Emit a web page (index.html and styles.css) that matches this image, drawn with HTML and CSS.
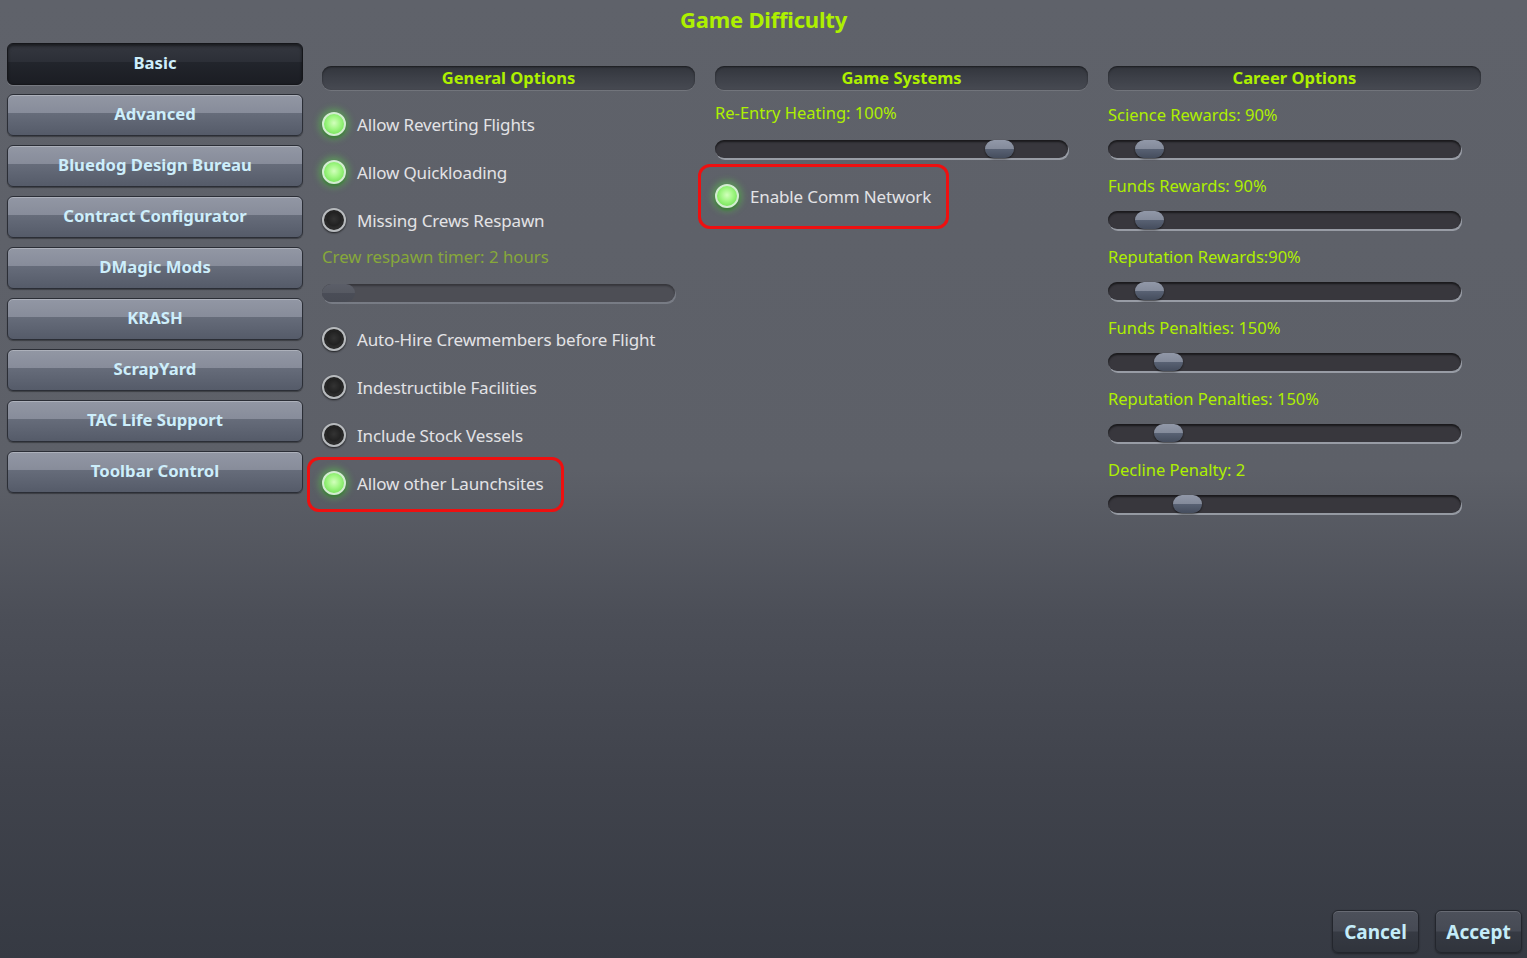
FILE: index.html
```html
<!DOCTYPE html>
<html>
<head>
<meta charset="utf-8">
<link rel="stylesheet" href="styles.css">
</head>
<body>
<div class="screen">
  <h1 class="title">Game Difficulty</h1>
  <div class="main">
    <nav class="sidebar">
      <div class="tab active">Basic</div>
      <div class="tab">Advanced</div>
      <div class="tab">Bluedog Design Bureau</div>
      <div class="tab">Contract Configurator</div>
      <div class="tab">DMagic Mods</div>
      <div class="tab">KRASH</div>
      <div class="tab">ScrapYard</div>
      <div class="tab">TAC Life Support</div>
      <div class="tab">Toolbar Control</div>
    </nav>

    <section class="col general">
      <div class="col-head">General Options</div>
      <div class="toggle"><span class="dot on"></span><span>Allow Reverting Flights</span></div>
      <div class="toggle"><span class="dot on"></span><span>Allow Quickloading</span></div>
      <div class="toggle"><span class="dot"></span><span>Missing Crews Respawn</span></div>
      <div class="label disabled">Crew respawn timer: 2 hours</div>
      <div class="track disabled"><span class="thumb" style="left:0px"></span></div>
      <div class="toggle after-slider"><span class="dot"></span><span>Auto-Hire Crewmembers before Flight</span></div>
      <div class="toggle"><span class="dot"></span><span>Indestructible Facilities</span></div>
      <div class="toggle"><span class="dot"></span><span>Include Stock Vessels</span></div>
      <div class="toggle mark mark-a"><span class="dot on"></span><span>Allow other Launchsites</span></div>
    </section>

    <section class="col systems">
      <div class="col-head">Game Systems</div>
      <div class="setting">
        <div class="label">Re-Entry Heating: 100%</div>
        <div class="track"><span class="thumb" style="left:270px"></span></div>
      </div>
      <div class="toggle mark mark-b"><span class="dot on"></span><span>Enable Comm Network</span></div>
    </section>

    <section class="col career">
      <div class="col-head">Career Options</div>
      <div class="setting">
        <div class="label">Science Rewards: 90%</div>
        <div class="track"><span class="thumb" style="left:27px"></span></div>
      </div>
      <div class="setting">
        <div class="label">Funds Rewards: 90%</div>
        <div class="track"><span class="thumb" style="left:27px"></span></div>
      </div>
      <div class="setting">
        <div class="label">Reputation Rewards:90%</div>
        <div class="track"><span class="thumb" style="left:27px"></span></div>
      </div>
      <div class="setting">
        <div class="label">Funds Penalties: 150%</div>
        <div class="track"><span class="thumb" style="left:46px"></span></div>
      </div>
      <div class="setting">
        <div class="label">Reputation Penalties: 150%</div>
        <div class="track"><span class="thumb" style="left:46px"></span></div>
      </div>
      <div class="setting">
        <div class="label">Decline Penalty: 2</div>
        <div class="track"><span class="thumb" style="left:65px"></span></div>
      </div>
    </section>
  </div>
  <footer class="footer">
    <div class="btn">Cancel</div>
    <div class="btn">Accept</div>
  </footer>
</div>
</body>
</html>
```

FILE: styles.css
```css
* { box-sizing: border-box; }
html, body { margin: 0; padding: 0; }
body {
  width: 1527px;
  height: 958px;
  overflow: hidden;
  font-family: "Noto Sans", "Open Sans", sans-serif;
  background: linear-gradient(to bottom, #5f626a 0px, #5d6068 470px, #4b4e57 620px, #40434c 780px, #363a43 958px);
}
.screen {
  height: 958px;
  display: flex;
  flex-direction: column;
}
.title {
  margin: 0;
  height: 42px;
  padding-top: 4px;
  text-align: center;
  font-size: 22px;
  line-height: 30px;
  font-weight: 700;
  color: #aef000;
  letter-spacing: -0.2px;
}
.main {
  display: flex;
  align-items: flex-start;
}
.sidebar {
  width: 296px;
  margin-left: 7px;
  margin-top: 1px;
  display: flex;
  flex-direction: column;
  gap: 9px;
}
.tab {
  height: 42px;
  border-radius: 6px;
  border: 1px solid #2b2e36;
  background: linear-gradient(to bottom, #9297a4 0%, #878c9a 45%, #666c7a 46%, #555b69 100%);
  box-shadow: inset 0 1px 0 rgba(255,255,255,0.25), 0 1px 1px rgba(0,0,0,0.35);
  color: #cdeefb;
  font-weight: 700;
  font-size: 16.7px;
  display: flex;
  align-items: center;
  justify-content: center;
  padding-bottom: 3px;
}
.tab.active {
  background: linear-gradient(to bottom, #34373f 0%, #2c2f37 45%, #22252c 46%, #1b1d23 100%);
  border-color: #15161a;
  box-shadow: inset 0 2px 3px rgba(0,0,0,0.5), 0 1px 0 rgba(255,255,255,0.15);
}
.col {
  width: 373px;
  margin-left: 19px;
  padding-top: 24px;
  display: flex;
  flex-direction: column;
}
.col + .col { margin-left: 20px; }
.col-head {
  height: 24px;
  border-radius: 9px;
  background: linear-gradient(to bottom, #32353c 0%, #3d4048 50%, #474a52 100%);
  box-shadow: inset 0 1px 2px rgba(0,0,0,0.5), 0 1px 0 rgba(255,255,255,0.12);
  color: #aef000;
  font-weight: 700;
  font-size: 16.5px;
  line-height: 24px;
  text-align: center;
  margin-bottom: 12px;
}
.general .col-head { margin-bottom: 10px; }
.toggle {
  height: 48px;
  display: flex;
  align-items: center;
  gap: 11px;
  color: #e3e3e6;
  font-size: 17px;
  letter-spacing: -0.15px;
  width: fit-content;
  position: relative;
}
.toggle.after-slider { margin-top: 13px; }
.dot {
  width: 24px;
  height: 24px;
  border-radius: 50%;
  flex: none;
  border: 2px solid #b7babd;
  background: radial-gradient(circle at 50% 45%, #333 0%, #222 45%, #4a4a4a 100%);
  box-shadow: 0 1px 2px rgba(0,0,0,0.7), inset 0 0 2px rgba(0,0,0,0.8);
}
.dot.on {
  border-color: #d2edd0;
  background: radial-gradient(circle at 50% 45%, #d2ffbc 0%, #a2f785 40%, #5fd944 100%);
  box-shadow: 0 0 7px 3px rgba(90,220,70,0.45), 0 2px 3px rgba(20,80,20,0.7);
}
.mark::after {
  content: "";
  position: absolute;
  border: 3px solid #ee1010;
  border-radius: 12px;
  pointer-events: none;
}
.mark-a::after { left: -15px; right: -21px; top: -2px; bottom: -5px; }
.mark-b::after { left: -17px; right: -18px; top: -8px; bottom: -9px; }
.label {
  height: 26px;
  font-size: 16.5px;
  line-height: 26px;
  color: #aef000;
  white-space: nowrap;
}
.label.disabled { color: #87a83a; font-size: 16.8px; }
.col > .label.disabled { margin-bottom: 14px; }
.setting {
  display: flex;
  flex-direction: column;
  gap: 12px;
  margin-bottom: 15px;
}
.systems .setting { margin-top: -2px; gap: 14px; margin-bottom: 14px; }
.track {
  position: relative;
  height: 18px;
  width: 353px;
  border-radius: 9px;
  background: #38373d;
  box-shadow: inset 0 2px 2px rgba(0,0,0,0.55), 1px 2px 0 rgba(200,205,215,0.55);
}
.track.disabled {
  background: #4d4e55;
  box-shadow: inset 0 2px 2px rgba(0,0,0,0.3), 1px 2px 0 rgba(160,165,175,0.4);
}
.thumb {
  position: absolute;
  top: 0;
  width: 29px;
  height: 18px;
  border-radius: 9px;
  background: linear-gradient(to bottom, #9198a8 0%, #848b9b 48%, #586173 52%, #454d5d 100%);
  box-shadow: 0 1px 2px rgba(0,0,0,0.6);
}
.track.disabled .thumb {
  width: 33px;
  background: linear-gradient(to bottom, #5b5e68 0%, #565962 50%, #4a4d57 52%, #484b54 100%);
  box-shadow: none;
}
.footer {
  margin-top: auto;
  display: flex;
  justify-content: flex-end;
  gap: 16px;
  padding-right: 5px;
  padding-bottom: 5px;
}
.btn {
  height: 43px;
  width: 87px;
  border-radius: 6px;
  border: 1px solid #23262d;
  background: linear-gradient(to bottom, #4d515b 0%, #464a54 48%, #363a43 52%, #30343c 100%);
  box-shadow: inset 0 1px 0 rgba(255,255,255,0.15), 0 1px 2px rgba(0,0,0,0.4);
  color: #c4ecf9;
  font-weight: 700;
  font-size: 19px;
  display: flex;
  align-items: center;
  justify-content: center;
}
```
